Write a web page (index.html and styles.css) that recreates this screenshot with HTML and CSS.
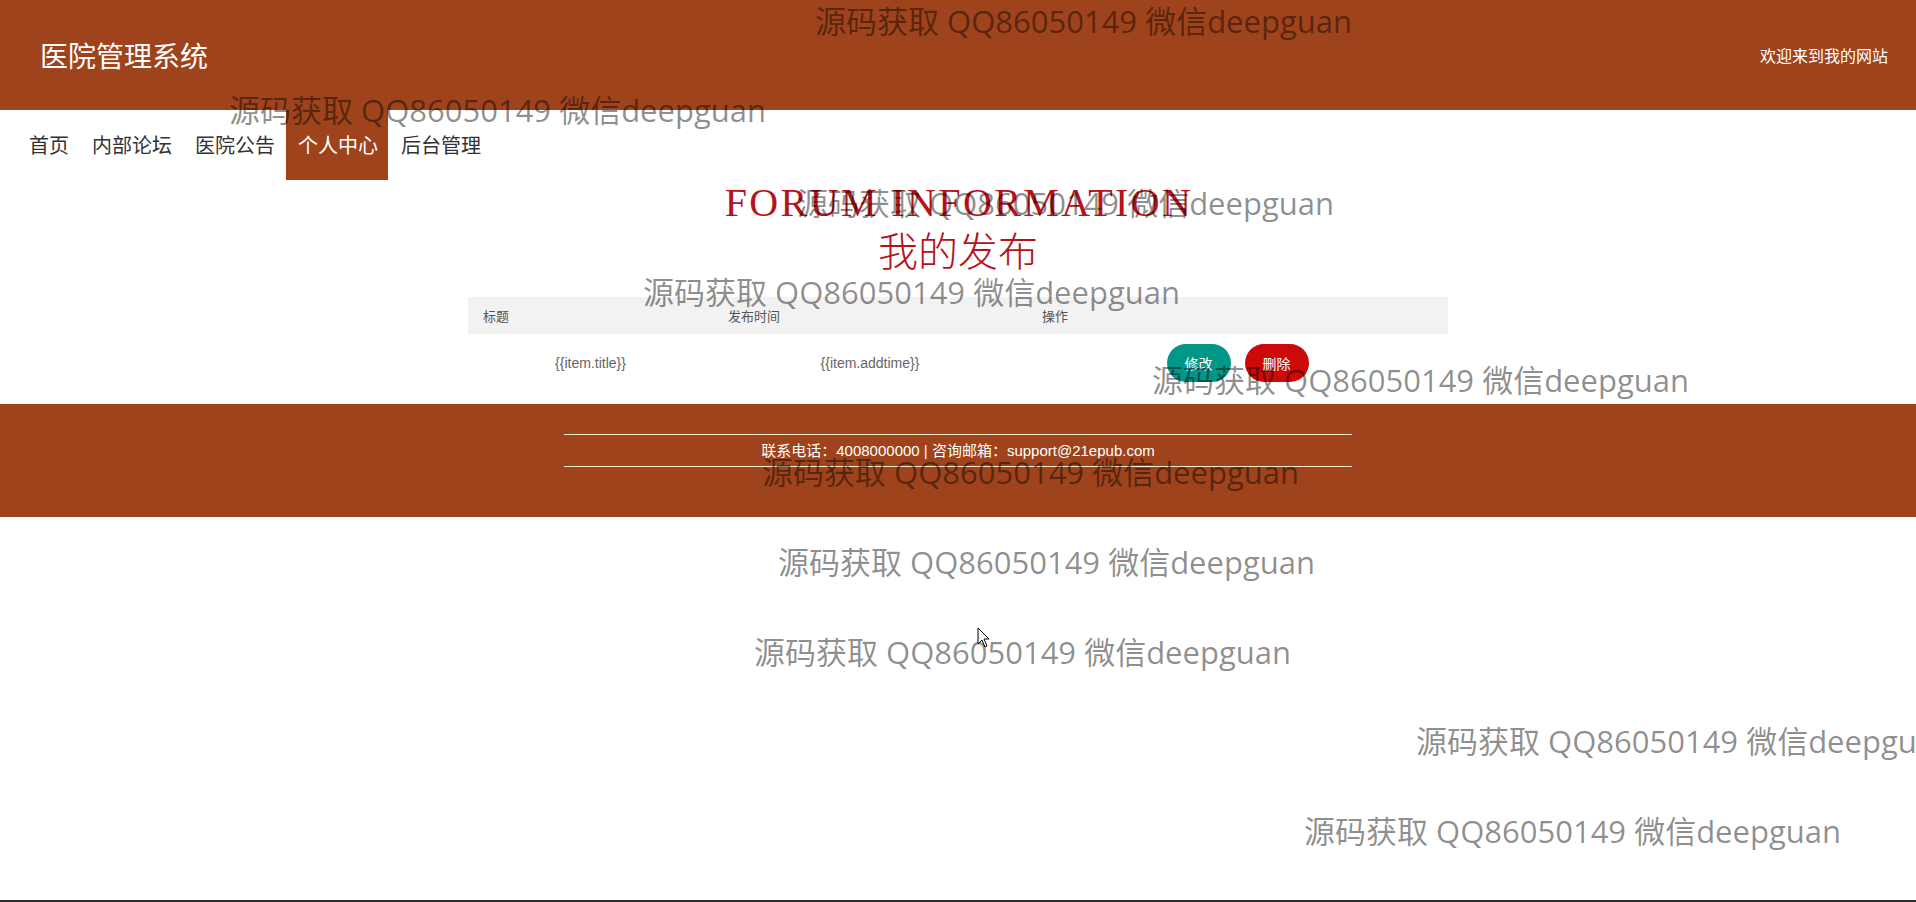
FILE: index.html
```html
<!DOCTYPE html>
<html lang="zh-CN">
<head>
<meta charset="utf-8">
<title>医院管理系统</title>
<link rel="stylesheet" href="styles.css">
</head>
<body>
<header class="topbar">
  <div class="brand">医院管理系统</div>
  <div class="welcome">欢迎来到我的网站</div>
</header>
<nav class="nav">
  <a class="nav-item">首页</a>
  <a class="nav-item">内部论坛</a>
  <a class="nav-item">医院公告</a>
  <a class="nav-item active">个人中心</a>
  <a class="nav-item">后台管理</a>
</nav>
<main class="main">
  <div class="heading">
    <div class="heading-en">FORUM INFORMATION</div>
    <div class="heading-cn">我的发布</div>
  </div>
  <table class="list">
    <colgroup>
      <col class="c1"><col class="c2"><col class="c3">
    </colgroup>
    <thead>
      <tr><th>标题</th><th>发布时间</th><th>操作</th></tr>
    </thead>
    <tbody>
      <tr>
        <td>{{item.title}}</td>
        <td>{{item.addtime}}</td>
        <td><div class="actions"><span class="btn btn-edit">修改</span><span class="btn btn-del">删除</span></div></td>
      </tr>
    </tbody>
  </table>
</main>
<footer class="footer">
  <div class="footer-inner">联系电话：4008000000 | 咨询邮箱：support@21epub.com</div>
</footer>
<div class="wm wm1">源码获取 QQ86050149 微信deepguan</div>
<div class="wm wm2">源码获取 QQ86050149 微信deepguan</div>
<div class="wm wm3">源码获取 QQ86050149 微信deepguan</div>
<div class="wm wm4">源码获取 QQ86050149 微信deepguan</div>
<div class="wm wm5">源码获取 QQ86050149 微信deepguan</div>
<div class="wm wm6">源码获取 QQ86050149 微信deepguan</div>
<div class="wm wm7">源码获取 QQ86050149 微信deepguan</div>
<div class="wm wm8">源码获取 QQ86050149 微信deepguan</div>
<div class="wm wm9">源码获取 QQ86050149 微信deepguan</div>
<div class="wm wm10">源码获取 QQ86050149 微信deepguan</div>
<svg class="cursor" width="13" height="21" viewBox="0 0 13 21"><path d="M1 1 L1 17 L5 13 L8 20 L10 19 L7 12 L12 12 Z" fill="#fff" stroke="#000" stroke-width="1"/></svg>
<div class="bottom-edge"></div>
</body>
</html>
```
FILE: styles.css
```css
html, body {
  margin: 0;
  padding: 0;
}
body {
  font-family: "Noto Sans CJK SC", "Liberation Sans", sans-serif;
  background: #fff;
  color: #333;
  position: relative;
  min-height: 902px;
  overflow: hidden;
}
.topbar {
  height: 110px;
  background: #9f431c;
  display: flex;
  align-items: center;
  justify-content: space-between;
  padding: 0 28px 0 40px;
}
.brand {
  color: #fff;
  font-size: 28px;
  line-height: 30px;
}
.welcome {
  color: #fff;
  font-size: 16px;
  line-height: 20px;
}
.nav {
  display: flex;
  gap: 3px;
  padding-left: 19px;
  height: 70px;
}
.nav-item {
  display: block;
  padding: 0 10px;
  line-height: 70px;
  font-size: 20px;
  color: #333;
}
.nav-item.active {
  background: #9f431c;
  color: #fff;
  padding: 0 10px 0 12px;
  margin-left: -2px;
}
.heading {
  text-align: center;
  color: #b5121b;
}
.heading-en {
  font-family: "Liberation Serif", serif;
  font-size: 40px;
  line-height: 46px;
  letter-spacing: 2.4px;
  padding-left: 2px;
}
.heading-cn {
  font-family: "Liberation Serif", "Noto Sans CJK SC", serif;
  font-size: 40px;
  line-height: 54px;
  font-weight: 300;
}
.list {
  width: 980px;
  margin: 17px auto 12px;
  border-collapse: collapse;
  font-family: "Liberation Sans", "Noto Sans CJK SC", sans-serif;
  font-size: 14px;
  color: #666;
}
.c1 { width: 245px; }
.c2 { width: 314px; }
.c3 { width: 421px; }
.list th {
  background: #f2f2f2;
  height: 37px;
  padding: 0 15px;
  text-align: left;
  font-weight: normal;
  color: #555;
  font-family: "Noto Sans CJK SC", sans-serif;
  font-size: 13px;
}
.list td {
  padding: 10px 15px;
  text-align: center;
}
.actions {
  display: flex;
  justify-content: center;
  gap: 14px;
}
.btn {
  display: block;
  height: 38px;
  line-height: 38px;
  padding: 0 18px;
  border-radius: 100px;
  color: #fff;
  font-size: 14px;
  font-family: "Noto Sans CJK SC", sans-serif;
}
.btn-edit { background: #009688; }
.btn-del { background: #cc0a0a; }
.footer {
  background: #9f431c;
  padding: 30px 0 50px;
}
.footer-inner {
  width: 788px;
  margin: 0 auto;
  border-top: 1px solid #f6eccd;
  border-bottom: 1px solid #f6eccd;
  text-align: center;
  color: #fff;
  font-size: 15px;
  line-height: 31px;
  font-family: "Liberation Sans", "Noto Sans CJK SC", sans-serif;
}
.wm {
  position: absolute;
  font-family: "Open Sans", "Noto Sans CJK SC", sans-serif;
  font-size: 31px;
  line-height: 30px;
  color: rgba(0, 0, 0, 0.45);
  white-space: nowrap;
  pointer-events: none;
}
.wm1 { left: 815px; top: 6px; }
.wm2 { left: 229px; top: 95px; }
.wm3 { left: 797px; top: 188px; }
.wm4 { left: 643px; top: 277px; }
.wm5 { left: 1152px; top: 365px; }
.wm6 { left: 762px; top: 457px; }
.wm7 { left: 778px; top: 547px; }
.wm8 { left: 754px; top: 637px; }
.wm9 { left: 1416px; top: 726px; }
.wm10 { left: 1304px; top: 816px; }
.cursor {
  position: absolute;
  left: 977px;
  top: 627px;
}
.bottom-edge {
  position: fixed;
  left: 0;
  right: 0;
  bottom: 0;
  height: 2px;
  background: #2b2b2b;
}
```
